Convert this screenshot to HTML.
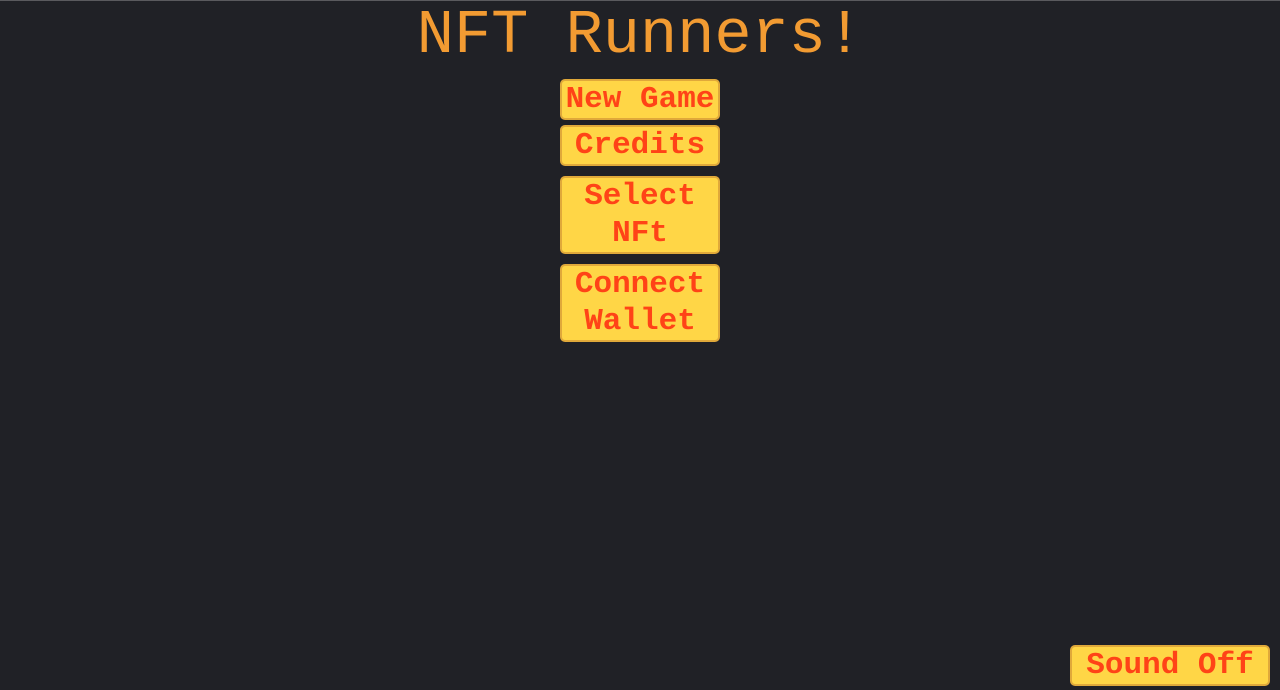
<!DOCTYPE html>
<html><head><style>
html,body{margin:0;padding:0;}
body{width:1280px;height:690px;background:#202126;position:relative;overflow:hidden;border-top:1px solid #5a5a5e;box-sizing:border-box;}
h1{position:absolute;left:0;width:1280px;top:0px;margin:0;text-align:center;font-family:"Liberation Mono","Courier New",monospace;font-weight:normal;font-size:62px;line-height:70px;color:#f29b32;}
.b{position:absolute;box-sizing:border-box;background:#ffd646;border:2px solid #e0a93a;border-radius:5px;color:#ff4317;font-family:"Liberation Mono","Courier New",monospace;font-weight:bold;font-size:31px;line-height:37px;text-align:center;}
.m{left:560px;width:160px;}
</style></head><body>
<h1>NFT Runners!</h1>
<div class="b m" style="top:78px;height:41px;">New Game</div>
<div class="b m" style="top:124px;height:41px;">Credits</div>
<div class="b m" style="top:175px;height:78px;">Select<br>NFt</div>
<div class="b m" style="top:263px;height:78px;">Connect<br>Wallet</div>
<div class="b" style="left:1070px;top:644px;width:200px;height:41px;">Sound Off</div>
</body></html>
